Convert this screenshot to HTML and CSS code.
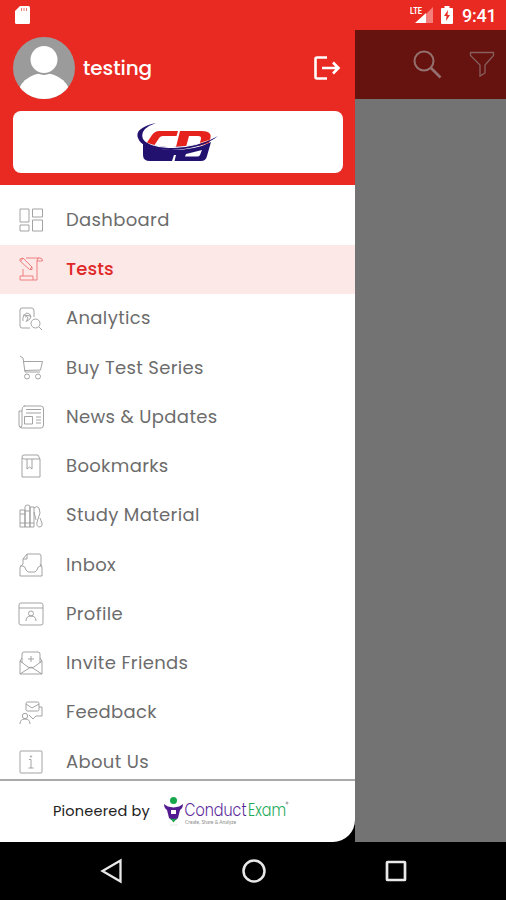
FILE: index.html
```html
<!DOCTYPE html>
<html lang="en">
<head>
<meta charset="utf-8">
<title>Tests</title>
<link rel="stylesheet" href="styles.css">
</head>
<body>
<div class="phone">
  <header class="status">
    <svg class="sd" width="18" height="22" viewBox="0 0 18 22"><path d="M7 2h8.500q1.500 0 1.500 1.500v15q0 1.500-1.500 1.500h-12q-1.500 0-1.500-1.500V7z" fill="#fff"/><path d="M8.500 4v3M11 4v3M13.500 4v3" stroke="#f0726d"/></svg>
    <div class="status-right">
      <svg width="24" height="20" viewBox="0 0 24 20"><text class="lte" x="0" y="9" textLength="12" lengthAdjust="spacingAndGlyphs">LTE</text><path d="M23 2v16H16V9z" fill="#f47e79"/><path d="M5 18L16 8v10z" fill="#fff"/></svg>
      <svg class="battery" width="12" height="20" viewBox="0 0 12 20"><path d="M3.500 1h5v2H11q1 0 1 1v14q0 1-1 1H1q-1 0-1-1V4q0-1 1-1h2.500z" fill="#fff"/><path d="M7 5L3 11h2.500L5 16l4-6H6.500z" fill="#e92a22"/></svg>
      <span class="clock">9:41</span>
    </div>
  </header>
  <main class="stage">
    <aside class="drawer">
      <section class="account">
        <div class="user">
          <svg class="avatar" width="62" height="62" viewBox="0 0 62 62"><defs><clipPath id="disc"><circle cx="31" cy="31" r="31"/></clipPath></defs><g clip-path="url(#disc)"><path fill="#9b9b9b" d="M0 0h62v62H0z"/><ellipse cx="31" cy="61" rx="27" ry="25" fill="#fff"/><circle cx="31" cy="23" r="15" fill="#9b9b9b"/><circle cx="31" cy="22.500" r="13.500" fill="#fff"/></g></svg>
          <span class="name">testing</span>
          <svg class="logout" width="28" height="26" viewBox="0 0 28 26" fill="none" stroke="#fff" stroke-width="2.600"><path d="M14 2.500H4q-1.500 0-1.500 1.500v18q0 1.500 1.500 1.500h10M9 13h16M20 7.500l5.500 5.500-5.500 5.500"/></svg>
        </div>
        <div class="brand">
          <svg width="84" height="40" viewBox="0 0 84 40"><path d="M7 20q8 7 29 8 24 0 39-8l-4 14q-1 5-6 5H38.500l1.500-6h-2L36 39H14q-7 0-7-6z" fill="#23116f"/><path d="M10 22L16 13q3-4 7-4h19l-1.500 5H27q-3 0-4.500 3l-4 6q-5-1-8.500-1zM44 9h22q10 0 8.500 7l-1.500 5-10 3 2-7q.500-3-3-3H53l-3 11h-10z" fill="#e5221c"/><path d="M50 32l16-4-2 5q-.500 1.500-3 1.500H49z" fill="#fff"/><path d="M20 1Q-2 6 2 16q4 12 33 12 31-1 47-14Q64 25 37 25 12 25 7 17 3 7 20 1z" fill="#23116f"/><path d="M8 18q7 8 30 8 25-1 43-12Q64 24 37 25 15 25 8 18z" fill="#fff"/></svg>
        </div>
      </section>
      <nav class="menu">
        <a class="item"><svg class="icon" viewBox="0 0 24 24"><path d="M1 1h9v13H1zM13.500 1h10v8h-10zM1 17h9v6H1zM13.500 12h10v11h-10z"/></svg><span>Dashboard</span></a>
        <a class="item active"><svg class="icon" viewBox="0 0 24 24"><path d="M7 1h14q2.500 0 2.500 3H18V23H1v-4h13v4M4 19v-7M18 4q0-3 2-3M1 2l3-1 9 9v2.500h-2.500L1 4zM4 1L2 4M11 12l2-2"/></svg><span>Tests</span></a>
        <a class="item"><svg class="icon" viewBox="0 0 24 24"><path d="M11 21H3q-2 0-2-2V3q0-2 2-2h10q2 0 2 3v6M4 14q-1-6 4-8 3 0 4 4-1 3-4 4M4 8l8 1M6 10q2-2 3 1l-2 4"/><circle cx="16.500" cy="16.500" r="4.500"/><path d="M20 20l3 3"/></svg><span>Analytics</span></a>
        <a class="item"><svg class="icon" viewBox="0 0 24 24"><path d="M1 0l3 2 2 14h15M4 5.500h19.500l-2 8.500L5.500 14.500"/><circle cx="8" cy="20.500" r="2.500"/><circle cx="19" cy="20.500" r="2.500"/></svg><span>Buy Test Series</span></a>
        <a class="item"><svg class="icon" viewBox="0 0 24 24"><path d="M5 1h17q2.500 0 2.500 3v16q0 3-2.500 3H3q-3 0-3-3V6h3v14q0 3-2 2M3 6q0-5 3-5M7 4.500h15M7 8h15M5.500 11.500h8V19h-8zM17 12h5M17 15h5M17 18h5"/></svg><span>News &amp; Updates</span></a>
        <a class="item"><svg class="icon" viewBox="0 0 24 24"><path d="M3 4v19h18V5H5Q3 5 3 3t2-2h14l2 4M8 5v10l2.500-2 2.500 2V5"/></svg><span>Bookmarks</span></a>
        <a class="item"><svg class="icon" viewBox="0 0 24 24"><path d="M1 6h5v17H1zM6 3q0-2 2.500-2T11 3v20H6zM11 3h4v20h-4zM15 4q3-3 5 0l1 5-3 9q-1 5 3 5 3-1 2-4l-2-5M15 8l2 8M1 10h5M1 19h5M6 7h5M6 19h5M11 19h4"/></svg><span>Study Material</span></a>
        <a class="item"><svg class="icon" viewBox="0 0 24 24"><path d="M4 11V6l4-5h12q2 0 2 2v10M8 1v5H4M4 11l-3 3v9h22v-9l-2-3M1 13h3q2 0 3 4l2 2h7l2-2q1-4 3-4h2"/></svg><span>Inbox</span></a>
        <a class="item"><svg class="icon" viewBox="0 0 24 24"><rect x="0" y="1" width="24" height="22" rx="2"/><path d="M0 6h24M7 19q0-5 5-5t5 5"/><circle cx="12" cy="11.500" r="2.500"/></svg><span>Profile</span></a>
        <a class="item"><svg class="icon" viewBox="0 0 24 24"><path d="M3 12V3q0-2 2-2h14q2 0 2 2v9M3 7l-2 3v13h22V10l-2-3M1 10l8 6 3 1 3-1 8-6M1 23l11-7 11 7M12 5v6M9 8h6"/></svg><span>Invite Friends</span></a>
        <a class="item"><svg class="icon" viewBox="0 0 24 24"><rect x="7" y="1" width="13" height="9" rx="1.500"/><path d="M7 3l6 4 7-4M20 6h3v9h-6l-3 3-4-4M1 23q0-5 5-5t5 5"/><circle cx="6" cy="15" r="2.700"/></svg><span>Feedback</span></a>
        <a class="item"><svg class="icon" viewBox="0 0 24 24"><rect x="1" y="1" width="22" height="22" rx="1"/><path d="M10 9.500h2V18M9.500 18h5"/><circle cx="12" cy="6.500" r=".7"/></svg><span>About Us</span></a>
      </nav>
      <footer class="credit">
        <span class="by">Pioneered by</span>
        <svg class="partner" width="130" height="36" viewBox="0 -2 130 36"><path d="M1 8q3 3 9.500 3.500Q17 11 20 8q0 4-3 6l-2 8q-4 5-9 0l-2-8Q1 12 1 8z" fill="#521b91"/><circle cx="10.500" cy="4.500" r="3.500" fill="#16a64c"/><path d="M6.500 21.500q4 3 8 0l-4 5z" fill="#16a64c"/><path d="M8 14h5v4H8z" fill="#fff"/><path d="M7 29h8" stroke="#ddd" stroke-width=".7"/><text class="wordmark" x="21.500" y="20" textLength="62" lengthAdjust="spacingAndGlyphs" fill="#5b2a9a">Conduct</text><text class="wordmark" x="85" y="20" textLength="38" lengthAdjust="spacingAndGlyphs" fill="#22aa58">Exam</text><circle cx="124" cy="7" r="1" fill="none" stroke="#777" stroke-width=".7"/><text class="tagline" x="22" y="28" textLength="51" lengthAdjust="spacingAndGlyphs">Create, Share &amp; Analyze</text></svg>
      </footer>
    </aside>
    <section class="behind">
      <div class="toolbar">
        <svg width="32" height="32" viewBox="0 0 32 32" fill="none" stroke="#94706e"><circle cx="13" cy="12" r="9.500" stroke-width="2"/><path d="M20 19l9.500 9.500" stroke-width="2.700"/></svg>
        <svg class="filter" width="26" height="27" viewBox="0 0 26 27" fill="none" stroke="#87605e" stroke-width="1.300"><path d="M1.500 1.500h23v3L16 14v8l-5 3V14L1.500 4.500z"/></svg>
      </div>
    </section>
  </main>
  <footer class="system">
    <svg width="24" height="26" viewBox="0 0 24 26" fill="none" stroke="#e8e8e8" stroke-width="2.300"><path d="M20.500 2.500v21L2.500 13z"/></svg>
    <svg width="26" height="26" viewBox="0 0 26 26" fill="none" stroke="#e8e8e8" stroke-width="2.500"><circle cx="13" cy="13" r="10.500"/></svg>
    <svg width="22" height="22" viewBox="0 0 22 22" fill="none" stroke="#e8e8e8" stroke-width="2.700"><rect x="2" y="2" width="18" height="18" rx=".5"/></svg>
  </footer>
</div>
</body>
</html>
```

FILE: styles.css
```css
* { box-sizing: border-box; }
body { margin: 0; font-family: Poppins, Inter, "Open Sans", sans-serif; }
svg { display: block; flex: none; }
.phone { width: 506px; height: 900px; display: grid; grid-template-rows: 30px 812px 58px; background: #000; overflow: hidden; }
.status { background: #e92a22; display: flex; justify-content: space-between; align-items: center; padding: 0 10px 0 13px; }
.status-right { display: flex; align-items: center; }
.battery { margin: 0 9px 0 7px; }
.lte { font: bold 9px Roboto, sans-serif; fill: #fff; }
.clock { color: #fff; font: 500 18px Roboto, sans-serif; width: 34px; letter-spacing: -.2px; }
.stage { display: grid; grid-template-columns: 355px 1fr; min-height: 0; }
.drawer { display: flex; flex-direction: column; min-height: 0; background: #fff; border-radius: 0 0 22px 0; overflow: hidden; }
.account { height: 155px; flex: none; background: #e92a22; padding: 7px 12px 0 13px; }
.user { display: flex; align-items: center; height: 62px; }
.name { color: #fff; font-size: 20px; font-weight: 500; letter-spacing: -.1px; margin-left: 8px; }
.logout { margin-left: auto; margin-right: 2px; }
.brand { margin-top: 12px; height: 62px; background: #fff; border-radius: 8px; display: flex; justify-content: center; align-items: center; }
.menu { flex: 1; min-height: 0; overflow: hidden; padding-top: 10.500px; }
.item { height: 49.25px; padding-left: 19px; display: flex; align-items: center; color: #6c6c6c; font-size: 18px; letter-spacing: .35px; }
.item span { white-space: nowrap; padding-bottom: 1.500px; }
.icon { width: 24px; height: 24px; margin-right: 23px; overflow: visible; fill: none; stroke: #999; stroke-width: .9; stroke-linejoin: round; }
.active { background: #fde8e8; color: #e02727; font-weight: 500; letter-spacing: .1px; }
.active .icon { stroke: #ed7474; }
.credit { height: 63px; flex: none; border-top: 2px solid #aaa; display: flex; align-items: center; padding-left: 53px; }
.by { width: 110px; white-space: nowrap; font-size: 14.500px; letter-spacing: .2px; color: #222; }
.partner { overflow: visible; }
.wordmark { font: 300 18px Poppins, Lato, sans-serif; }
.tagline { font: 5px Lato, sans-serif; fill: #888; }
.behind { background: #737373; }
.toolbar { height: 69px; background: #66120f; display: flex; align-items: center; padding: 0 11px 0 56px; justify-content: space-between; }
.system { display: grid; grid-template-columns: repeat(3, 142px); padding-left: 41px; align-items: center; justify-items: center; background: #000; }
```
